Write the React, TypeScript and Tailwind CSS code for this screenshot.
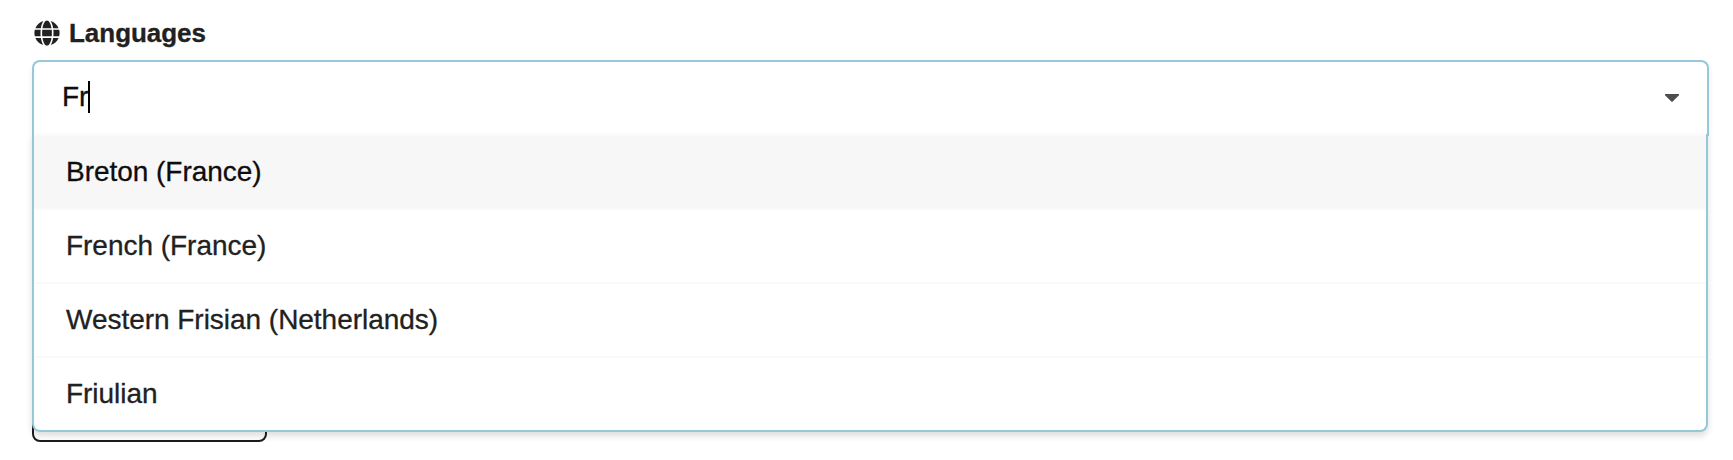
import { FaGlobe } from "react-icons/fa";

const options = [
  "Breton (France)",
  "French (France)",
  "Western Frisian (Netherlands)",
  "Friulian",
];

export default function App() {
  return (
    <div className="h-[460px] w-[1733px] overflow-hidden bg-white pl-8 font-['Liberation_Sans',Arial,sans-serif] text-[28px] tracking-[-0.03px] text-[#212121] [-webkit-text-stroke:0.3px]">
      <label className="flex h-[60px] items-center pt-[5px]">
        <FaGlobe className="ml-[2px] h-[26px] w-[26px]" />
        <span className="ml-[9px] text-[26px] font-bold leading-8">Languages</span>
      </label>

      <div className="relative w-[1677px]">
        <div className="flex h-[76px] items-center rounded-t-lg border-2 border-b-0 border-[#96c8da] bg-white pb-1 pl-[28px] pr-[28px] text-[#0d0d0d] shadow-[0_4px_6px_rgba(34,36,38,0.08)]">
          <span className="leading-8">Fr</span>
          <span className="h-8 w-[2px] bg-black" />
          <svg className="ml-auto mt-[2px] h-2 w-[14px]" viewBox="0 0 14 8" fill="#4d4d4d">
            <path d="M0 0H14V1.2L7.7 7.6Q7 8.2 6.3 7.6L0 1.2Z" />
          </svg>
        </div>

        <ul className="absolute left-0 top-[74px] z-10 w-[1676px] overflow-hidden rounded-b-lg border-2 border-t-0 border-[#96c8da] bg-white shadow-[0_4px_6px_rgba(34,36,38,0.15)]">
          {options.map((option, index) => (
            <li
              key={option}
              className={
                index === 0
                  ? "flex h-[74px] items-center border-t-2 border-[#fafafa] bg-[#f7f7f7] pl-8 text-[#0d0d0d]"
                  : "flex h-[74px] items-center border-t-2 border-[#fafafa] pl-8"
              }
            >
              <span className="leading-8">{option}</span>
            </li>
          ))}
        </ul>
      </div>

      <div className="mt-[246px] h-[60px] w-[235px] rounded-lg border-2 border-[#1b1c1d]" />
    </div>
  );
}
